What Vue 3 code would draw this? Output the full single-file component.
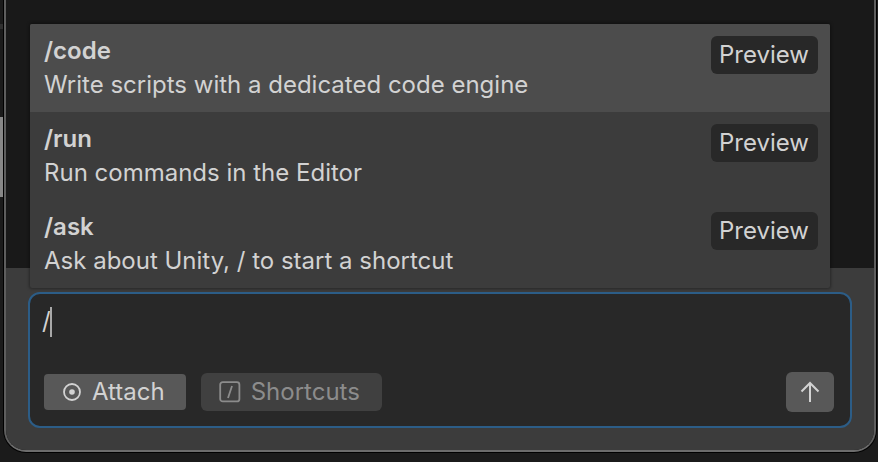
<script setup>
import { ref } from 'vue';

const commands = [
  { name: '/code', text: 'Write scripts with a dedicated code engine' },
  { name: '/run', text: 'Run commands in the Editor' },
  { name: '/ask', text: 'Ask about Unity, / to start a shortcut' },
];

const active = ref(0);
const message = ref('/');

const pick = (index) => {
  active.value = index;
  message.value = commands[index].name + ' ';
};
</script>

<template>
  <div class="page">
    <div class="edge">
      <div class="edge-top"></div>
      <div class="edge-thumb"></div>
    </div>
    <main class="window">
      <div class="history"></div>
      <footer class="footer">
        <form class="composer" @submit.prevent>
          <div v-if="message.startsWith('/')" class="menu">
            <button
              v-for="(item, index) in commands"
              :key="item.name"
              type="button"
              class="item"
              :class="{ active: index === active }"
              @click="pick(index)"
            >
              <span class="info">
                <span class="name">{{ item.name }}</span>
                <span class="text">{{ item.text }}</span>
              </span>
              <span class="badge">Preview</span>
            </button>
          </div>

          <div class="field">
            <textarea v-model="message" class="input" rows="2" aria-label="Message"></textarea>
            <div class="mirror" aria-hidden="true">
              <span class="typed">{{ message }}</span><span class="caret"></span>
            </div>
          </div>

          <div class="tools">
            <button type="button" class="tool">
              <svg width="20" height="20" viewBox="0 0 20 20" fill="none">
                <circle cx="10" cy="10" r="8" stroke="currentColor" stroke-width="1.8" />
                <circle cx="10" cy="10" r="2.8" fill="currentColor" />
              </svg>
              Attach
            </button>
            <button type="button" class="tool shortcuts" disabled>
              <svg width="22" height="22" viewBox="0 0 22 22" fill="none" stroke="currentColor">
                <rect x="1.2" y="1.2" width="19.2" height="19.2" rx="2.5" stroke-width="1.8" />
                <path d="M13 5L9 17" stroke-width="1.8" />
              </svg>
              Shortcuts
            </button>
            <button type="submit" class="send" aria-label="Send">
              <svg width="20" height="22" viewBox="0 0 20 22" fill="none" stroke="currentColor" stroke-width="2">
                <path d="M10 21V2M1.5 10.5L10 2L18.5 10.5" />
              </svg>
            </button>
          </div>
        </form>
      </footer>
    </main>
  </div>
</template>

<style>
body {
  background: #1b1b1b;
}
</style>

<style scoped>
.page {
  display: flex;
  box-sizing: border-box;
  min-height: 100vh;
  padding: 0 2px 10px 0;
  background: #1b1b1b;
  color: #d2d2d2;
  font-family: Inter, "Liberation Sans", sans-serif;
  font-size: 24px;
  line-height: 34px;
}

.edge {
  width: 3px;
  margin-right: 1px;
}

.edge-top {
  height: 24px;
  margin-bottom: 88px;
  border-bottom: 5px solid #303030;
}

.edge-thumb {
  height: 80px;
  background: #888;
}

.window {
  display: flex;
  flex: 1;
  flex-direction: column;
  overflow: hidden;
  border: 2px solid #5e5e5e;
  border-top: 0;
  border-bottom-color: #6c6c6c;
  border-radius: 0 0 22px 22px;
  background: #191919;
  box-shadow: 0 0 0 1px #000;
}

.history {
  flex: 1;
}

.footer {
  padding: 24px 22px 22px;
  background: #3c3c3c;
}

.composer {
  position: relative;
  padding: 10px 16px 14px 12px;
  border: 2px solid #2c5d87;
  border-radius: 12px;
  background: #282828;
}

button,
textarea {
  border: 0;
  color: inherit;
  font: inherit;
}

/* sits on top of the history, right above the text box */
.menu {
  position: absolute;
  right: 20px;
  bottom: calc(100% + 6px);
  left: 0;
  overflow: hidden;
  border-radius: 2px;
  background: #3c3c3c;
  box-shadow: 0 0 3px 1px rgba(0, 0, 0, 0.35);
}

.item {
  display: flex;
  align-items: flex-start;
  justify-content: space-between;
  width: 100%;
  padding: 10px 12px 10px 14px;
  background: none;
  text-align: left;
}

.item.active {
  background: #4c4c4c;
}

.info {
  display: flex;
  flex-direction: column;
}

.name {
  font-weight: 600;
}

.badge {
  margin-top: 2px;
  padding: 2px 9px 2px 8px;
  border-radius: 6px;
  background: #282828;
}

.field {
  position: relative;
  height: 68px;
}

.input {
  display: block;
  box-sizing: border-box;
  width: 100%;
  height: 100%;
  padding: 0;
  outline: none;
  background: none;
  caret-color: transparent;
  resize: none;
}

.mirror {
  position: absolute;
  inset: 0;
  pointer-events: none;
}

.typed {
  visibility: hidden;
  white-space: pre-wrap;
}

.caret {
  display: inline-block;
  width: 2px;
  height: 30px;
  margin-left: -1px;
  background: #a8a8a8;
  vertical-align: middle;
}

.tools {
  display: flex;
  align-items: center;
  gap: 15px;
  padding-left: 2px;
}

.tool {
  display: flex;
  align-items: center;
  gap: 10px;
  padding: 1px 21px 1px 18px;
  border-radius: 4px;
  background: #585858;
}

.shortcuts {
  padding: 2px 22px 2px 18px;
  border-radius: 6px;
  background: #404040;
  color: #8c8c8c;
}

.send {
  display: flex;
  align-items: center;
  justify-content: center;
  width: 48px;
  height: 40px;
  margin-left: auto;
  padding: 0;
  border-radius: 6px;
  background: #585858;
}
</style>
